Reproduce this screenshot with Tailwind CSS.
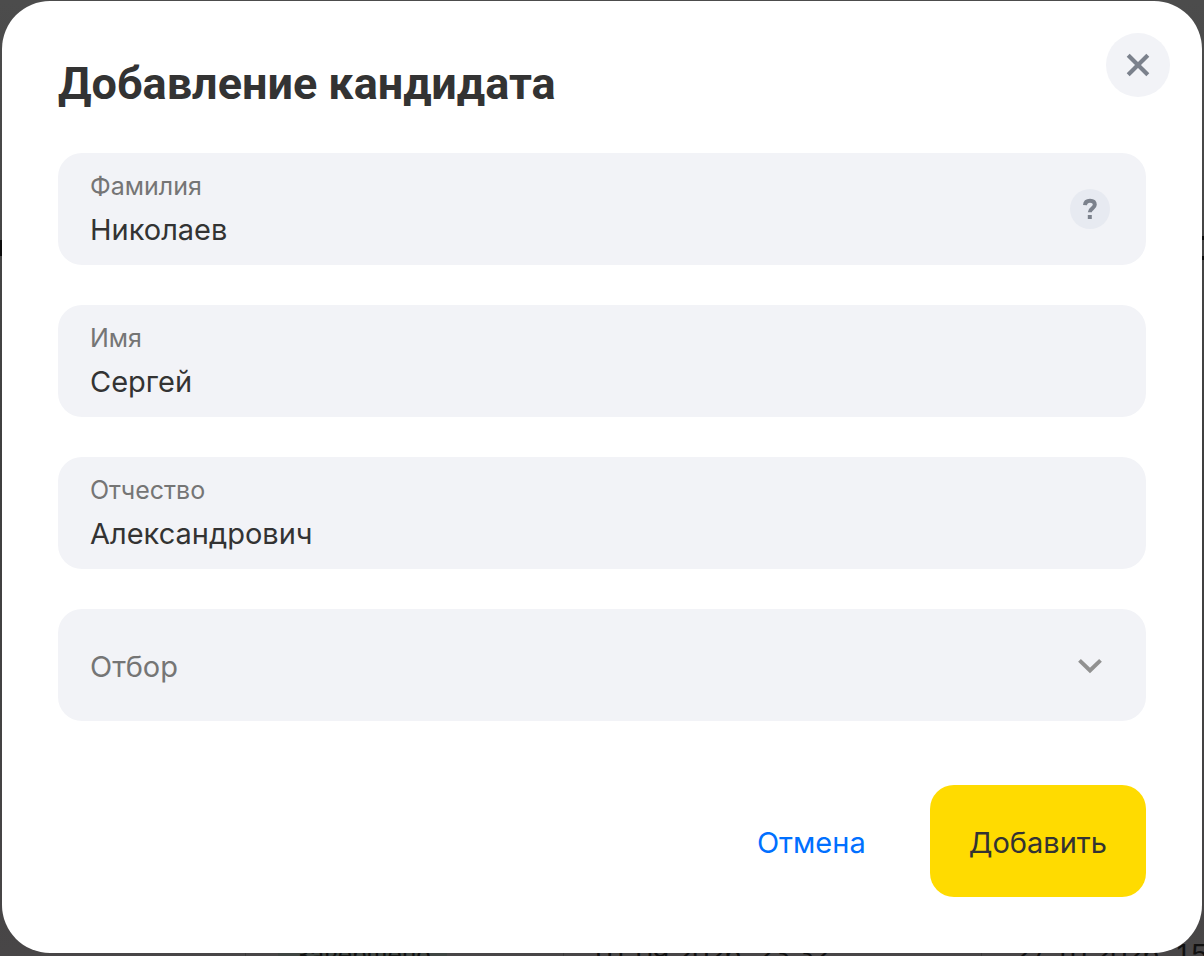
<!DOCTYPE html>
<html lang="ru">
<head>
    <meta charset="UTF-8">
    <meta name="viewport" content="width=device-width, initial-scale=1.0">
    <title>Добавление кандидата</title>
    <script src="https://cdn.jsdelivr.net/npm/@tailwindcss/browser@4"></script>
</head>
<body class="min-h-screen bg-[#444444] overflow-hidden font-['Inter','Liberation_Sans',sans-serif] text-[#333333]">

<!-- Dimmed page behind the dialog -->
<div class="fixed inset-0 overflow-hidden bg-linear-to-b from-[#4c4c4c] via-[#3f3f3f] to-[#484647]" aria-hidden="true">
    <div class="absolute left-0 top-60 w-1 h-4 bg-[#0d0d0d]"></div>
    <div class="absolute right-0 top-59 w-1 h-6 border-y-4 border-[#0d0d0d]"></div>
    <div class="absolute inset-x-0 -bottom-4 flex h-9 items-center whitespace-nowrap font-['Liberation_Sans',sans-serif] text-[#111111] text-[29px] leading-9">
        <div class="shrink-0 w-[246px] h-full border-r border-[#3a3a3a]"></div>
        <div class="shrink-0 w-[318px] h-full pl-8 border-r border-[#3a3a3a]">
            <span class="inline-block px-4 bg-[#3f4542] text-[26px]">Завершено</span>
        </div>
        <div class="shrink-0 w-[418px] h-full pl-8 border-r border-[#3a3a3a]">01.09.2026, 23:32</div>
        <div class="shrink-0 h-full pl-8">27.10.2026, 15:10</div>
    </div>
</div>

<!-- Dialog -->
<div role="dialog" aria-modal="true" aria-labelledby="dialogTitle"
     class="relative mx-0.5 mt-px p-14 bg-white rounded-[48px]">
    <button type="button" aria-label="Закрыть"
            class="absolute top-8 right-8 flex items-center justify-center size-16 rounded-full bg-[#f2f3f7] text-[#7b818c]">
        <svg class="size-8" viewBox="0 0 32 32" fill="none" stroke="currentColor" stroke-width="4.2">
            <path d="M6.2 6.2 25.8 25.8M25.8 6.2 6.2 25.8"/>
        </svg>
    </button>

    <h1 id="dialogTitle" class="mb-[42px] font-['Roboto',sans-serif] text-[45px] leading-[54px] font-bold">Добавление кандидата</h1>

    <form>
        <div class="flex flex-col gap-10">
            <div class="flex items-center h-28 pl-8 pr-9 rounded-3xl bg-[#f2f3f7]">
                <div class="flex-1 flex flex-col gap-2 pt-0.5">
                    <label for="lastName" class="text-[25px] leading-8 text-[#757575]">Фамилия</label>
                    <input type="text" id="lastName" value="Николаев" class="w-full h-10 text-[29px] outline-none">
                </div>
                <button type="button" aria-label="Подсказка"
                        class="flex items-center justify-center size-10 rounded-full bg-[#e7eaf1] text-[#7b818c]">
                    <svg class="size-6" viewBox="0 0 24 24" fill="none" stroke="currentColor" stroke-width="4">
                        <path d="M7 8.200C7.200 5.200 9.200 3.800 12 3.800c3 0 4.800 1.500 4.800 4 0 3.600-5 3.400-5 7.400"/>
                        <path d="M9.800 20h4"/>
                    </svg>
                </button>
            </div>

            <div class="flex items-center h-28 px-8 rounded-3xl bg-[#f2f3f7]">
                <div class="flex-1 flex flex-col gap-2 pt-0.5">
                    <label for="firstName" class="text-[25px] leading-8 text-[#757575]">Имя</label>
                    <input type="text" id="firstName" value="Сергей" class="w-full h-10 text-[29px] outline-none">
                </div>
            </div>

            <div class="flex items-center h-28 px-8 rounded-3xl bg-[#f2f3f7]">
                <div class="flex-1 flex flex-col gap-2 pt-0.5">
                    <label for="middleName" class="text-[25px] leading-8 text-[#757575]">Отчество</label>
                    <input type="text" id="middleName" value="Александрович" class="w-full h-10 text-[29px] outline-none">
                </div>
            </div>

            <div class="relative">
                <select id="selection" aria-label="Отбор"
                        class="appearance-none w-full h-28 px-8 pt-1 rounded-3xl bg-[#f2f3f7] text-[29px] text-[#757575] outline-none">
                    <option>Отбор</option>
                </select>
                <svg class="absolute right-10 top-11 size-8 text-[#919191] pointer-events-none" viewBox="0 0 32 32"
                     fill="none" stroke="currentColor" stroke-width="4">
                    <path d="M5.500 7.400 16 17.400 26.500 7.400"/>
                </svg>
            </div>
        </div>

        <div class="flex items-center justify-end gap-16 mt-16">
            <button type="button" class="h-28 pt-1 text-[29px] text-[#0070ff]">Отмена</button>
            <button type="submit" class="h-28 px-[39px] pt-1 rounded-3xl bg-[#ffdb00] text-[29px]">Добавить</button>
        </div>
    </form>
</div>
</body>
</html>
